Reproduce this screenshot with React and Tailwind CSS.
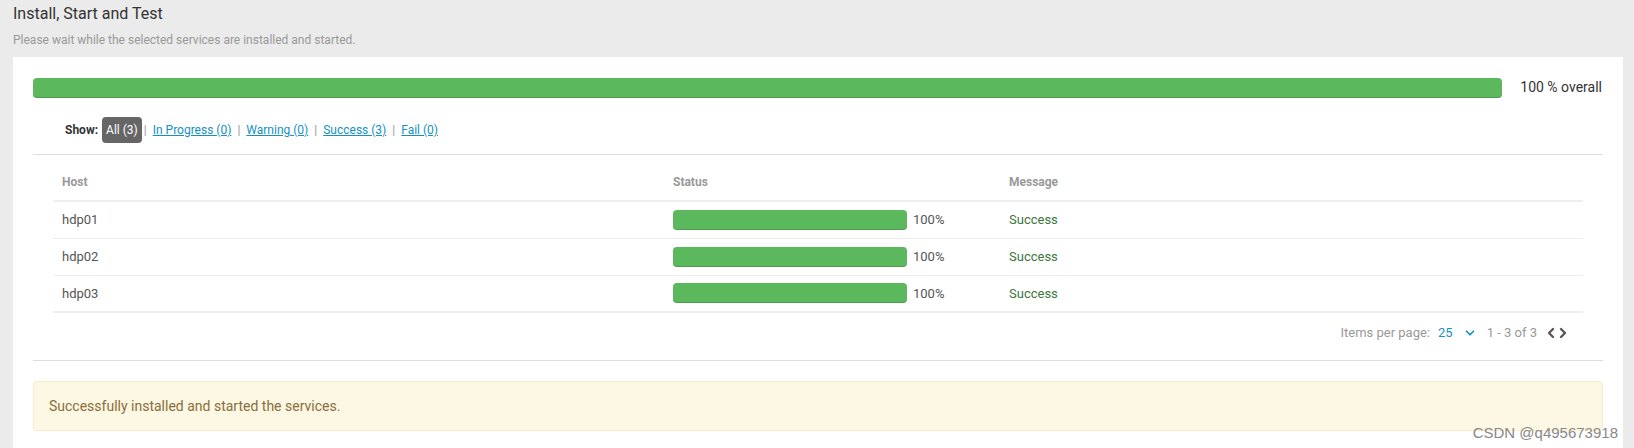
import { ChevronDown, ChevronLeft, ChevronRight } from 'lucide-react';

const HOSTS = [
  { name: 'hdp01', progress: 100, message: 'Success' },
  { name: 'hdp02', progress: 100, message: 'Success' },
  { name: 'hdp03', progress: 100, message: 'Success' },
];

const FILTERS = ['In Progress (0)', 'Warning (0)', 'Success (3)', 'Fail (0)'];

function Bar({ className }) {
  return <div className={`rounded-[4px] bg-[#5cb85c] shadow-[inset_0_-1px_0_rgba(0,0,0,0.15)] ${className}`} />;
}

export default function App() {
  return (
    <div
      className="relative min-h-[448px] overflow-hidden bg-[#ebebeb] pl-[13px] pr-[11px]"
      style={{ fontFamily: 'Roboto, "Liberation Sans", sans-serif' }}
    >
      <h2 className="pt-[2px] text-[16px] leading-[24px] text-[#333]">Install, Start and Test</h2>
      <p className="mt-[6px] text-[12px] leading-[16px] text-[#999]">
        Please wait while the selected services are installed and started.
      </p>

      <div className="mt-[9px] bg-white px-[20px] pt-[20px] pb-[20px]">
        <div className="flex items-center">
          <Bar className="h-[20px] flex-1" />
          <span className="ml-[18px] mr-[1px] text-[14px] text-[#333]">100 % overall</span>
        </div>

        <div className="mt-[19px] flex items-center pl-[32px] text-[12px]">
          <span className="mr-[4px] font-bold text-[#333]">Show:</span>
          <span className="rounded-[4px] bg-[#666] px-[4px] py-[5px] leading-[16px] text-white">All (3)</span>
          {FILTERS.map((f, i) => (
            <span key={f} className="flex items-center">
              <span className={`${i === 0 ? 'ml-[2px]' : 'ml-[6px]'} mr-[6px] text-[#999]`}>|</span>
              <a href="#" className="text-[#1491c1] underline">{f}</a>
            </span>
          ))}
        </div>

        <div className="mt-[11px] border-t border-[#e0e0e0] px-[20px]">
          <table className="w-full table-fixed border-b-2 border-[#eee] text-[13px]">
            <thead>
              <tr className="border-b-2 border-[#eee]">
                <th className="w-[611px] px-[9px] pt-[18px] pb-[9px] text-left text-[12px] font-bold text-[#999]">Host</th>
                <th className="w-[336px] px-[9px] pt-[18px] pb-[9px] text-left text-[12px] font-bold text-[#999]">Status</th>
                <th className="px-[9px] pt-[18px] pb-[9px] text-left text-[12px] font-bold text-[#999]">Message</th>
              </tr>
            </thead>
            <tbody>
              {HOSTS.map((h, i) => (
                <tr key={h.name} className={i < HOSTS.length - 1 ? 'border-b border-[#eee]' : ''}>
                  <td className="h-[37px] px-[9px] text-[#555]">{h.name}</td>
                  <td className="px-[9px]">
                    <div className="flex items-center">
                      <Bar className="h-[20px] w-[234px]" />
                      <span className="ml-[6px] text-[#555]">{h.progress}%</span>
                    </div>
                  </td>
                  <td className="px-[9px] text-[#3c763d]">{h.message}</td>
                </tr>
              ))}
            </tbody>
          </table>

          <div className="flex items-center justify-end pt-[10px] pb-[17px] pr-[12px] text-[13px]">
            <span className="text-[#999]">Items per page:</span>
            <span className="ml-[8px] text-[#1491c1]">25</span>
            <ChevronDown className="ml-[10px] h-[14px] w-[14px] text-[#1491c1]" strokeWidth={3} />
            <span className="ml-[10px] text-[#999]">1 - 3 of 3</span>
            <ChevronLeft className="ml-[6px] h-[16px] w-[16px] text-[#555]" strokeWidth={3.5} />
            <ChevronRight className="-ml-[4px] h-[16px] w-[16px] text-[#555]" strokeWidth={3.5} />
          </div>
        </div>

        <div className="border-t border-[#ddd] pt-[20px]">
          <div className="rounded-[4px] border border-[#faebcc] bg-[#fcf8e3] px-[15px] py-[15px] text-[14px] leading-[18px] text-[#8a6d3b]">
            Successfully installed and started the services.
          </div>
        </div>
      </div>

      <div className="absolute right-[16px] bottom-[6px] text-[15px] text-[#888]" style={{ fontFamily: '"Liberation Sans", sans-serif' }}>
        CSDN @q495673918
      </div>
    </div>
  );
}
